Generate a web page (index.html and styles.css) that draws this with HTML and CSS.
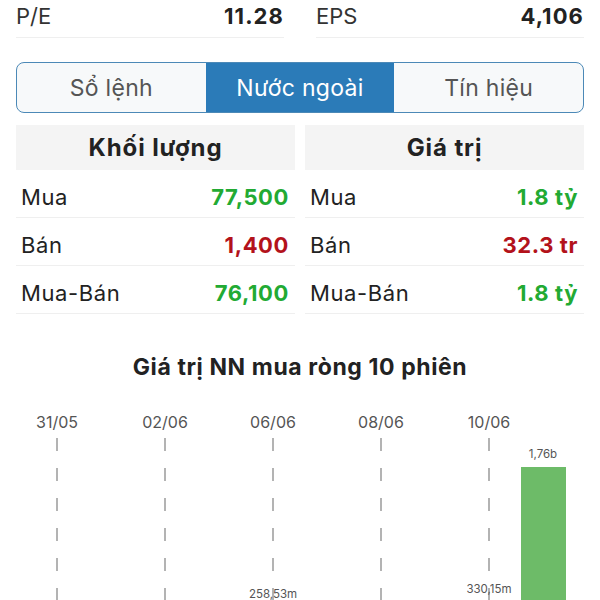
FILE: index.html
```html
<!DOCTYPE html>
<html lang="vi">

<head>
    <meta charset="UTF-8">
    <meta name="viewport" content="width=device-width, initial-scale=1.0">
    <title>Nước ngoài</title>
    <link rel="stylesheet" href="styles.css">
</head>

<body>
    <div class="page">
        <div class="stats">
            <div class="stat">
                <span class="stat-label">P/E</span>
                <span class="stat-value">11.28</span>
            </div>
            <div class="stat">
                <span class="stat-label">EPS</span>
                <span class="stat-value">4,106</span>
            </div>
        </div>

        <div class="tabs">
            <div class="tab">Sổ lệnh</div>
            <div class="tab active">Nước ngoài</div>
            <div class="tab">Tín hiệu</div>
        </div>

        <div class="tables">
            <div class="table">
                <div class="table-head">Khối lượng</div>
                <div class="row"><span>Mua</span><span class="up">77,500</span></div>
                <div class="row"><span>Bán</span><span class="down">1,400</span></div>
                <div class="row"><span>Mua-Bán</span><span class="up">76,100</span></div>
            </div>
            <div class="table">
                <div class="table-head">Giá trị</div>
                <div class="row"><span>Mua</span><span class="up">1.8 tỷ</span></div>
                <div class="row"><span>Bán</span><span class="down">32.3 tr</span></div>
                <div class="row"><span>Mua-Bán</span><span class="up">1.8 tỷ</span></div>
            </div>
        </div>

        <h2 class="chart-title">Giá trị NN mua ròng 10 phiên</h2>

        <!-- 10 sessions, date shown on every other one -->
        <div class="chart">
            <div class="col dated">
                <span class="date">31/05</span>
            </div>
            <div class="col"></div>
            <div class="col dated">
                <span class="date">02/06</span>
            </div>
            <div class="col"></div>
            <div class="col dated">
                <span class="date">06/06</span>
                <span class="bar-value">258,53m</span>
                <div class="bar" style="height: 26px;"></div>
            </div>
            <div class="col"></div>
            <div class="col dated">
                <span class="date">08/06</span>
            </div>
            <div class="col"></div>
            <div class="col dated">
                <span class="date">10/06</span>
                <span class="bar-value">330,15m</span>
                <div class="bar" style="height: 31px;"></div>
            </div>
            <div class="col">
                <span class="date"></span>
                <span class="bar-value">1,76b</span>
                <div class="bar" style="height: 166px;"></div>
            </div>
        </div>
    </div>
</body>

</html>
```

FILE: styles.css
```css
html,
body {
    overflow: hidden;
}

body {
    font-family: Inter, "Noto Sans", sans-serif;
    background-color: #fff;
    color: #222;
    margin: 0;
    padding: 0;
}

.page {
    padding: 0 16px;
}

/* P/E, EPS */
.stats {
    display: flex;
    gap: 32px;
}

.stat {
    flex: 1;
    display: flex;
    justify-content: space-between;
    align-items: center;
    height: 31px;
    padding-bottom: 6px;
    border-bottom: 1px solid #efefef;
    font-size: 22px;
}

.stat-label {
    color: #333;
}

.stat-value {
    font-weight: 700;
    letter-spacing: 1.1px;
}

/* tabs */
.tabs {
    display: flex;
    margin-top: 24px;
    height: 49px;
    border: 1.5px solid #4c89b7;
    border-radius: 8px;
    overflow: hidden;
    background-color: #f7f9fa;
}

.tab {
    flex: 1;
    display: flex;
    align-items: center;
    justify-content: center;
    font-size: 23px;
    letter-spacing: 0.3px;
    color: #555;
}

.tab.active {
    background-color: #2b7bb8;
    color: #fff;
}

/* volume / value tables */
.tables {
    display: flex;
    gap: 10px;
    margin-top: 12px;
}

.table {
    flex: 1;
}

.table-head {
    height: 45px;
    display: flex;
    align-items: center;
    justify-content: center;
    background-color: #f4f4f4;
    font-size: 24px;
    font-weight: 700;
    letter-spacing: 0.9px;
}

.row {
    display: flex;
    justify-content: space-between;
    align-items: center;
    height: 41px;
    padding: 6px 6px 0 5px;
    border-bottom: 1px solid #efefef;
    font-size: 22px;
    letter-spacing: 0.6px;
}

.up {
    color: #22aa33;
    font-weight: 700;
}

.down {
    color: #b3121b;
    font-weight: 700;
}

/* chart */
.chart-title {
    margin: 39px 0 0;
    height: 28px;
    line-height: 28px;
    text-align: center;
    font-size: 23px;
    font-weight: 700;
    letter-spacing: 0.6px;
}

.chart {
    display: flex;
    margin-top: 30px;
    padding: 0 14px;
    height: 222px;
}

.col {
    flex: 0 0 54px;
    display: flex;
    flex-direction: column;
    align-items: center;
}

.col.dated {
    background-image: repeating-linear-gradient(to bottom, #b3b3b3 0 13px, transparent 13px 30px);
    background-size: 2px 200px;
    background-position: center 27px;
    background-repeat: no-repeat;
}

.date {
    flex: 1;
    line-height: 22px;
    font-size: 16px;
    color: #555;
}

.bar-value {
    font-size: 11.5px;
    line-height: 14px;
    color: #555;
    margin-bottom: 6px;
}

.bar {
    width: 45px;
    background-color: #6dbb68;
}
```
